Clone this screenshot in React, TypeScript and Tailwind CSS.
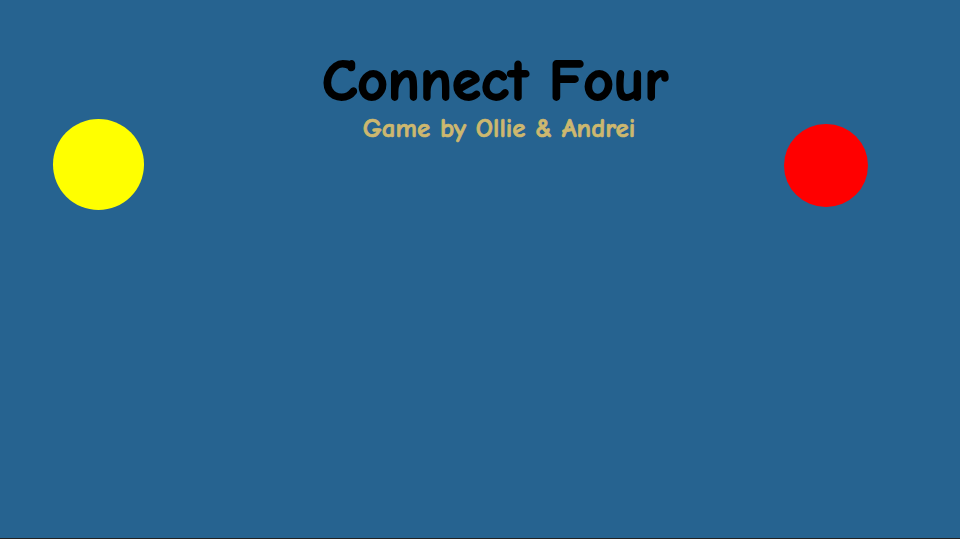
import React from 'react';

const App = () => {
  return (
    <div className="w-full h-[539px] bg-[#266390] border-b border-[#222222] overflow-hidden">
      <div className="flex items-start">
        {/* player one */}
        <div className="ml-[53px] mt-[119px] w-[91px] h-[91px] rounded-full bg-[#ffff00] shrink-0" />

        {/* title */}
        <div className="flex-1 flex flex-col items-center pl-[62px] pt-[46px] font-['Comic_Sans_MS','Comic_Neue','DejaVu_Sans',sans-serif] font-bold">
          <h1 className="text-[59px] leading-[70px] text-black [-webkit-text-stroke:1.8px_#000]">Connect Four</h1>
          <p className="ml-[8px] mt-[-2px] text-[27px] leading-[30px] text-[#cdb86f] [-webkit-text-stroke:0.7px_#cdb86f]">Game by Ollie &amp; Andrei</p>
        </div>

        {/* player two */}
        <div className="mr-[92px] mt-[124px] w-[84px] h-[83px] rounded-full bg-[#ff0000] shrink-0" />
      </div>
    </div>
  );
};

export default App;
